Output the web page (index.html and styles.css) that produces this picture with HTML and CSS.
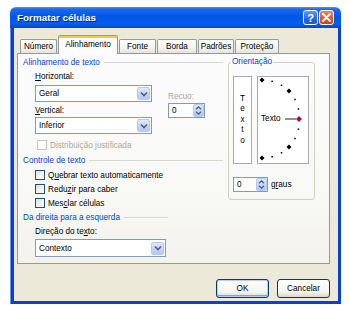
FILE: index.html
```html
<!DOCTYPE html>
<html lang="pt-br">
<head>
    <meta charset="UTF-8">
    <title>Formatar células</title>
    <link rel="stylesheet" href="styles.css">
</head>
<body>
    <div class="window">
        <div class="titlebar">
            <span class="title">Formatar células</span>
            <div class="caption-btns">
                <span class="cap-btn help">?</span>
                <span class="cap-btn close">
                    <svg width="9" height="9" viewBox="0 0 9 9"><path d="M1 1 L8 8 M8 1 L1 8" stroke="#fff" stroke-width="1.8" stroke-linecap="round"/></svg>
                </span>
            </div>
        </div>
        <div class="frame">
            <div class="client">
                <div class="tabs">
                    <span class="tab w-numero">Número</span>
                    <span class="tab active w-alin">Alinhamento</span>
                    <span class="tab w-fonte">Fonte</span>
                    <span class="tab w-borda">Borda</span>
                    <span class="tab w-padroes">Padrões</span>
                    <span class="tab w-protecao">Proteção</span>
                </div>

                <div class="panel">
                    <div class="left">
                        <div class="group-title">Alinhamento de texto</div>

                        <div class="align-block">
                            <div class="fields">
                                <div class="label lbl-h"><u>H</u>orizontal:</div>
                                <div class="select sel-geral">
                                    <span>Geral</span>
                                    <span class="drop"><svg width="8" height="6" viewBox="0 0 8 6"><path d="M1 1.5 L4 4.5 L7 1.5" fill="none" stroke="#4D6185" stroke-width="1.6"/></svg></span>
                                </div>
                                <div class="label lbl-v"><u>V</u>ertical:</div>
                                <div class="select sel-inferior">
                                    <span>Inferior</span>
                                    <span class="drop"><svg width="8" height="6" viewBox="0 0 8 6"><path d="M1 1.5 L4 4.5 L7 1.5" fill="none" stroke="#4D6185" stroke-width="1.6"/></svg></span>
                                </div>
                            </div>
                            <div class="indent">
                                <div class="label disabled lbl-recuo">Recuo:</div>
                                <div class="spin spin-recuo">
                                    <span>0</span>
                                    <span class="spin-arrows">
                                        <svg width="7" height="4" viewBox="0 0 7 4"><path d="M1 3.2 L3.5 0.8 L6 3.2" fill="none" stroke="#4D6185" stroke-width="1.3"/></svg>
                                        <svg width="7" height="4" viewBox="0 0 7 4"><path d="M1 0.8 L3.5 3.2 L6 0.8" fill="none" stroke="#4D6185" stroke-width="1.3"/></svg>
                                    </span>
                                </div>
                            </div>
                        </div>

                        <div class="check disabled row-dist"><span class="box"></span><span>Distribuição <u>j</u>ustificada</span></div>

                        <div class="group-title row-ctrl">Controle de texto</div>
                        <div class="check row-c1"><span class="box"></span><span>Q<u>u</u>ebrar texto automaticamente</span></div>
                        <div class="check row-c2"><span class="box"></span><span>Redu<u>z</u>ir para caber</span></div>
                        <div class="check row-c3"><span class="box"></span><span>Mes<u>c</u>lar células</span></div>

                        <div class="group-title short row-dir">Da direita para a esquerda</div>
                        <div class="label lbl-dir">Direção do te<u>x</u>to:</div>
                        <div class="select sel-contexto">
                            <span>Contexto</span>
                            <span class="drop"><svg width="8" height="6" viewBox="0 0 8 6"><path d="M1 1.5 L4 4.5 L7 1.5" fill="none" stroke="#4D6185" stroke-width="1.6"/></svg></span>
                        </div>
                    </div>

                    <fieldset class="orient">
                        <legend>Orientação</legend>
                        <div class="orient-body">
                            <div class="vbox">
                                <span>T</span><span>e</span><span>x</span><span>t</span><span>o</span>
                            </div>
                            <div class="dial">
                                <svg width="50" height="86" viewBox="0 0 50 86">
                                    <g fill="#000">
                                        <polygon points="4,0.5 6.5,3 4,5.5 1.5,3"/>
                                        <rect x="13.4" y="3.6" width="1.5" height="1.5"/>
                                        <rect x="22.8" y="7.5" width="1.5" height="1.5"/>
                                        <polygon points="31,11.5 33.5,14 31,16.5 28.5,14"/>
                                        <rect x="36.3" y="21.7" width="1.5" height="1.5"/>
                                        <rect x="39.7" y="31.2" width="1.5" height="1.5"/>
                                        <rect x="39.7" y="51.4" width="1.5" height="1.5"/>
                                        <rect x="36.3" y="60.8" width="1.5" height="1.5"/>
                                        <polygon points="31,67.5 33.5,70 31,72.5 28.5,70"/>
                                        <rect x="22.8" y="75" width="1.5" height="1.5"/>
                                        <rect x="13.4" y="79" width="1.5" height="1.5"/>
                                        <polygon points="4,78.5 6.5,81 4,83.5 1.5,81"/>
                                    </g>
                                    <line x1="27" y1="42" x2="38" y2="42" stroke="#222" stroke-width="1"/>
                                    <polygon points="41,39 44,42 41,45 38,42" fill="#A8102A"/>
                                </svg>
                                <span class="dial-text">Texto</span>
                            </div>
                        </div>
                        <div class="deg-row">
                            <div class="spin spin-deg">
                                <span>0</span>
                                <span class="spin-arrows">
                                    <svg width="7" height="4" viewBox="0 0 7 4"><path d="M1 3.2 L3.5 0.8 L6 3.2" fill="none" stroke="#4D6185" stroke-width="1.3"/></svg>
                                    <svg width="7" height="4" viewBox="0 0 7 4"><path d="M1 0.8 L3.5 3.2 L6 0.8" fill="none" stroke="#4D6185" stroke-width="1.3"/></svg>
                                </span>
                            </div>
                            <span>g<u>r</u>aus</span>
                        </div>
                    </fieldset>
                </div>

                <div class="actions">
                    <span class="btn default">OK</span>
                    <span class="btn">Cancelar</span>
                </div>
            </div>
        </div>
    </div>
</body>
</html>
```

FILE: styles.css
```css
* {
    box-sizing: border-box;
}

body {
    margin: 0;
    padding: 7px 0 0 10px;
    background: #ffffff;
    font-family: "Liberation Sans", Arial, sans-serif;
    font-size: 8.2px;
    color: #000000;
}

u {
    text-decoration: underline;
    text-underline-offset: 1px;
}

.window {
    width: 331px;
    height: 297px;
    display: flex;
    flex-direction: column;
}

.titlebar {
    height: 21px;
    border-radius: 6px 6px 0 0;
    background: linear-gradient(180deg, #4A92F5 0%, #1768EA 12%, #0157E8 45%, #045DEC 80%, #0349D0 100%);
    display: flex;
    align-items: center;
    justify-content: space-between;
    padding: 0 7px 0 7px;
}

.title {
    color: #ffffff;
    font-weight: bold;
    font-size: 9.9px;
    text-shadow: 1px 1px 0 #0A1E8A;
}

.caption-btns {
    display: flex;
    gap: 1px;
}

.cap-btn {
    width: 15px;
    height: 15px;
    border: 1px solid #ffffff;
    border-radius: 3px;
    display: flex;
    align-items: center;
    justify-content: center;
}

.help {
    background: linear-gradient(180deg, #5B9BFA 0%, #2766E8 60%, #1A55DC 100%);
    color: #ffffff;
    font-weight: bold;
    font-size: 11px;
}

.close {
    background: linear-gradient(180deg, #EE8A63 0%, #E05A30 55%, #CC4218 100%);
}

.frame {
    flex: 1;
    background: #0A3FD8;
    padding: 0 3px 3px;
    border-left: 1px solid #6F8FD6;
}

.client {
    height: 100%;
    background: #ECE9D8;
    padding: 7px 0 0 3px;
    display: flex;
    flex-direction: column;
}

/* abas */
.tabs {
    display: flex;
    align-items: flex-end;
    gap: 1px;
    height: 18px;
    padding-left: 3px;
}

.tab {
    height: 14px;
    border: 1px solid #919B9C;
    border-bottom: none;
    border-radius: 2px 2px 0 0;
    background: linear-gradient(180deg, #FFFFFF 0%, #F4F3EE 60%, #E6E4DA 100%);
    display: flex;
    align-items: center;
    justify-content: center;
}

.tab.active {
    height: 19px;
    margin-bottom: -1px;
    background: #FCFCFE;
    border-top: 1px solid #E68B2C;
    box-shadow: inset 0 2px 0 #FFC83C;
    position: relative;
    z-index: 1;
    padding-bottom: 2px;
}

.w-numero { width: 37px; }
.w-alin { width: 60px; }
.w-fonte { width: 37px; }
.w-borda { width: 40px; }
.w-padroes { width: 36px; }
.w-protecao { width: 44px; }

.panel {
    width: 313px;
    height: 211px;
    border: 1px solid #919B9C;
    background: linear-gradient(180deg, #FCFCFE 0%, #F8F8F5 70%, #F3F2EC 100%);
    display: flex;
    align-items: flex-start;
    padding: 3px 0 0 5px;
}

.left {
    width: 205px;
    display: flex;
    flex-direction: column;
}

.group-title {
    height: 10px;
    display: flex;
    align-items: center;
    color: #0046D5;
}

.group-title::after {
    content: "";
    flex: 1;
    height: 1px;
    background: #D8D8CC;
    margin: 0 5px 0 4px;
}

.group-title.short::after {
    flex: none;
    width: 44px;
}

.label {
    height: 10px;
    line-height: 10px;
    white-space: nowrap;
}

.disabled {
    color: #ACA899;
}

.align-block {
    display: flex;
}

.fields {
    margin-left: 12px;
    width: 117px;
    display: flex;
    flex-direction: column;
}

.lbl-h { margin-top: 5px; }
.sel-geral { margin-top: 3px; }
.lbl-v { margin-top: 4px; }
.sel-inferior { margin-top: 1px; }

.indent {
    margin-left: 16px;
    display: flex;
    flex-direction: column;
}

.lbl-recuo { margin-top: 25px; }
.spin-recuo { margin-top: 1px; width: 37px; }

.select {
    height: 17px;
    border: 1px solid #7F9DB9;
    background: #ffffff;
    display: flex;
    align-items: center;
    padding-left: 3px;
}

.select .drop {
    margin-left: auto;
    width: 13px;
    height: 13px;
    margin-right: 1px;
    border: 1px solid #B5C8F4;
    border-radius: 2px;
    background: linear-gradient(180deg, #E0E9FD 0%, #C6D6FC 50%, #B4C8F6 100%);
    display: flex;
    align-items: center;
    justify-content: center;
}

.sel-contexto {
    width: 131px;
    height: 18px;
    margin-left: 12px;
    margin-top: 2px;
}

.spin {
    height: 15px;
    border: 1px solid #7F9DB9;
    background: #ffffff;
    display: flex;
    align-items: center;
    padding-left: 3px;
}

.spin-arrows {
    margin-left: auto;
    width: 11px;
    height: 13px;
    border: 1px solid #B5C8F4;
    border-radius: 2px;
    background: linear-gradient(180deg, #E0E9FD 0%, #C6D6FC 50%, #B4C8F6 100%);
    display: flex;
    flex-direction: column;
    align-items: center;
    justify-content: space-around;
}

.check {
    height: 10px;
    display: flex;
    align-items: center;
    margin-left: 12px;
    white-space: nowrap;
}

.check .box {
    width: 10px;
    height: 10px;
    border: 1px solid #1C5180;
    background: linear-gradient(135deg, #DCDCD7 0%, #F6F6F4 60%, #FFFFFF 100%);
    margin-right: 3px;
}

.check.disabled .box {
    border-color: #CAC8BB;
    background: #ffffff;
}

.row-dist { margin-top: 6px; margin-left: 14px; }
.row-ctrl { margin-top: 5px; }
.row-c1 { margin-top: 5px; }
.row-c2 { margin-top: 4px; }
.row-c3 { margin-top: 4px; }
.row-dir { margin-top: 4px; }
.lbl-dir { margin-top: 5px; margin-left: 12px; }

/* orientação */
.orient {
    width: 87px;
    margin: 0;
    padding: 9px 5px 7px 4px;
    border: 1px solid #D0D0BF;
    border-radius: 3px;
    min-width: 0;
}

.orient legend {
    color: #0046D5;
    padding: 0 1px;
    margin-left: -2px;
    line-height: 10px;
}

.orient-body {
    display: flex;
    gap: 5px;
}

.vbox {
    width: 19px;
    height: 88px;
    border: 1px solid #A7ACB3;
    background: #ffffff;
    display: flex;
    flex-direction: column;
    align-items: center;
    justify-content: center;
    line-height: 10.5px;
}

.dial {
    width: 52px;
    height: 88px;
    border: 1px solid #A7ACB3;
    background: #ffffff;
    position: relative;
}

.dial svg {
    display: block;
}

.dial-text {
    position: absolute;
    left: 3px;
    top: 37px;
    line-height: 10px;
}

.deg-row {
    margin-top: 13px;
    display: flex;
    align-items: center;
    gap: 3px;
}

.spin-deg {
    width: 35px;
}

/* botões */
.actions {
    width: 313px;
    margin-top: 15px;
    display: flex;
    justify-content: flex-end;
    gap: 8px;
}

.btn {
    width: 53px;
    height: 19px;
    border: 1px solid #003C74;
    border-radius: 3px;
    background: linear-gradient(180deg, #FFFFFF 0%, #F5F4EF 70%, #DCD8CC 100%);
    display: flex;
    align-items: center;
    justify-content: center;
}

.btn.default {
    box-shadow: inset 0 0 0 1px #B7CDF3, inset 0 -1px 0 1px #7DA2E6;
}
```
